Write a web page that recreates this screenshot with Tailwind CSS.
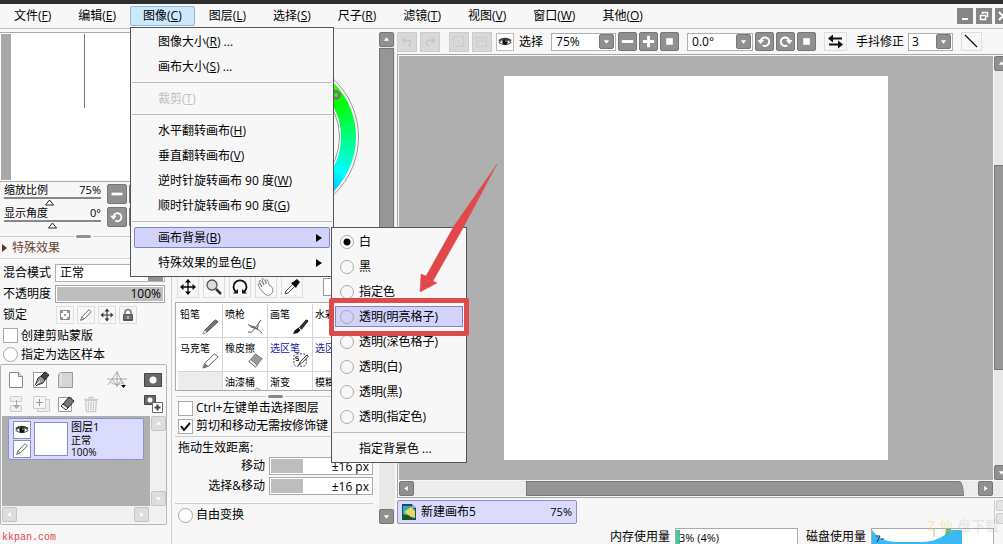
<!DOCTYPE html>
<html lang="zh-CN">
<head>
<meta charset="utf-8">
<title>新建画布5</title>
<script src="https://cdn.jsdelivr.net/npm/@tailwindcss/browser@4"></script>
</head>
<body class="relative flex h-screen flex-col overflow-hidden bg-[#f7f7f7] font-['Open_Sans','Noto_Sans_CJK_SC',sans-serif] text-[12px] leading-4 text-black">
<svg class="hidden">
  <symbol id="up" viewBox="0 0 15 15"><path d="M4.500 9h6l-3-4z" fill="#fff"/></symbol>
  <symbol id="down" viewBox="0 0 15 15"><path d="M4.500 6h6l-3 4z" fill="#fff"/></symbol>
  <symbol id="left" viewBox="0 0 15 15"><path d="M9 4.500v6l-4-3z" fill="#fff"/></symbol>
  <symbol id="right" viewBox="0 0 15 15"><path d="M6 4.500v6l4-3z" fill="#fff"/></symbol>
  <symbol id="stop" viewBox="0 0 20 20"><path d="M6.500 6.500h7v7h-7z" fill="#fff"/></symbol>
  <symbol id="minus" viewBox="0 0 20 20"><path d="M4 8.500h12v3H4z" fill="#fff"/></symbol>
  <symbol id="plus" viewBox="0 0 20 20"><path d="M4 8.500h12v3H4zM8.500 4h3v12h-3z" fill="#fff"/></symbol>
  <symbol id="ccw" viewBox="0 0 20 20"><path d="M6 9.500A4.500 4.500 0 1 1 8 14" fill="none" stroke="#fff" stroke-width="2"/><path d="M2.500 8.500h7L6 13z" fill="#fff"/></symbol>
  <symbol id="cw" viewBox="0 0 20 20"><path d="M14 9.500A4.500 4.500 0 1 0 12 14" fill="none" stroke="#fff" stroke-width="2"/><path d="M17.500 8.500h-7L14 13z" fill="#fff"/></symbol>
  <symbol id="eye" viewBox="0 0 18 18"><path d="M2 9.500q7-7 14 0q-7 5-14 0z" fill="#fff" stroke="#222"/><circle cx="9" cy="9" r="3" fill="#111"/><path d="M2 7.500q7-5 14 0" fill="none" stroke="#333" stroke-width="1.500"/><circle cx="10" cy="8" r=".8" fill="#fff"/></symbol>
  <symbol id="pencil" viewBox="0 0 18 18"><path d="M3 15l1.500-4L12.500 3l2.500 2.500-8 8zM4.500 11L7 13.500" fill="#fff" stroke="#555"/></symbol>
  <symbol id="move" viewBox="0 0 18 18"><path d="M9 3v12M3 9h12" stroke="currentColor" stroke-width="1.300"/><path d="M9 1l3 3.500H6zM9 17l3-3.500H6zM1 9l3.500-3v6zM17 9l-3.500-3v6z" fill="currentColor"/></symbol>
</svg>

<div class="h-1 shrink-0 bg-[#2e2e2e]"></div>
<header class="flex h-6 shrink-0 items-center overflow-hidden pl-px">
  <nav class="flex gap-px">
    <button class="h-5 border border-transparent px-3 leading-[18px]">文件(<u>F</u>)</button>
    <button class="h-5 border border-transparent px-3 leading-[18px]">编辑(<u>E</u>)</button>
    <button class="h-5 rounded-xs border border-[#90b8d8] bg-[#cce8fc] px-3 leading-[18px]">图像(<u>C</u>)</button>
    <button class="h-5 border border-transparent px-3 leading-[18px]">图层(<u>L</u>)</button>
    <button class="h-5 border border-transparent px-3 leading-[18px]">选择(<u>S</u>)</button>
    <button class="h-5 border border-transparent px-3 leading-[18px]">尺子(<u>R</u>)</button>
    <button class="h-5 border border-transparent px-3 leading-[18px]">滤镜(<u>T</u>)</button>
    <button class="h-5 border border-transparent px-3 leading-[18px]">视图(<u>V</u>)</button>
    <button class="h-5 border border-transparent px-3 leading-[18px]">窗口(<u>W</u>)</button>
    <button class="h-5 border border-transparent px-3 leading-[18px]">其他(<u>O</u>)</button>
  </nav>
  <div class="-mr-2 ml-auto flex shrink-0 gap-[3px]">
    <button aria-label="最小化" class="size-4 bg-[#858585]"><svg viewBox="0 0 16 16"><path d="M5 10h6v2H5z" fill="#fff"/></svg></button>
    <button aria-label="还原" class="size-4 bg-[#858585]"><svg viewBox="0 0 16 16"><path d="M6.500 6V4.500h5v4H10M4.500 7.500h5v4h-5z" fill="none" stroke="#fff" stroke-width="1.500"/></svg></button>
    <button aria-label="关闭" class="size-4 bg-[#858585]"><svg viewBox="0 0 16 16"><path d="M4 4l8 8M12 4l-8 8" stroke="#fff" stroke-width="2"/></svg></button>
  </div>
</header>

<main class="flex min-h-0 flex-1 overflow-hidden border-t border-[#c0c0c0]">
  <!-- Navigator and layers -->
  <section class="flex w-[172px] shrink-0 flex-col border-r border-[#ccc] pt-[3px]">
    <div class="flex h-[150px] shrink-0 border-y border-[#aaa] bg-white pl-px">
      <div class="my-px w-[10px] bg-[#a8a8a8]"></div>
      <div class="ml-[73px] mt-px h-[74px] w-px bg-[#777]"></div>
    </div>
    <div class="flex h-6 shrink-0 items-end gap-[6px] overflow-hidden pl-1">
      <div class="w-[97px] shrink-0">
        <div class="flex justify-between leading-[14px]"><span class="text-[11px]">缩放比例</span><span class="text-[11px]">75%</span></div>
        <div class="h-[2px] bg-[#888]"></div>
        <svg class="ml-10 h-[7px] w-[11px]" viewBox="0 0 11 7"><path d="M5.500 1L9.500 6h-8z" fill="#fff" stroke="#222"/></svg>
      </div>
      <button aria-label="缩小" class="mb-0.5 size-5 shrink-0 rounded-xs border border-[#777] bg-[#909090]"><svg class="size-full"><use href="#minus"/></svg></button>
      <button aria-label="放大" class="-ml-1 mb-0.5 size-5 shrink-0 rounded-xs border border-[#777] bg-[#909090]"><svg class="size-full"><use href="#plus"/></svg></button>
    </div>
    <div class="flex h-[23px] shrink-0 items-end gap-[6px] overflow-hidden pl-1">
      <div class="w-[97px] shrink-0">
        <div class="flex justify-between leading-[14px]"><span class="text-[11px]">显示角度</span><span class="text-[11px]">0°</span></div>
        <div class="h-[2px] bg-[#888]"></div>
        <svg class="ml-[43px] h-[7px] w-[11px]" viewBox="0 0 11 7"><path d="M5.500 1L9.500 6h-8z" fill="#fff" stroke="#222"/></svg>
      </div>
      <button aria-label="逆时针" class="mb-0.5 size-5 shrink-0 rounded-xs border border-[#777] bg-[#909090]"><svg class="size-full"><use href="#ccw"/></svg></button>
      <button aria-label="顺时针" class="-ml-1 mb-0.5 size-5 shrink-0 rounded-xs border border-[#777] bg-[#909090]"><svg class="size-full"><use href="#cw"/></svg></button>
    </div>
    <div class="mt-1.5 flex h-[3px] shrink-0 items-center gap-[2px]"><i class="h-px w-[74px] bg-[#ccc]"></i><i class="h-[3px] w-[15px] rounded-full bg-[#909090]"></i><i class="h-px flex-1 bg-[#ccc]"></i></div>
    <button class="flex h-[21px] shrink-0 items-center gap-[5px] border-b border-[#d5d5d5] pl-[2px] text-[#6c4334]"><svg class="h-2 w-[5px]" viewBox="0 0 5 8"><path d="M0 0l5 4-5 4z" fill="#5b3426"/></svg>特殊效果</button>
    <div class="flex flex-col gap-[3px] px-[3px] pt-[5px]">
      <div class="flex h-[18px] items-center gap-1"><label for="blend">混合模式</label>
        <div class="flex h-[18px] w-[110px] items-center border border-[#b0b0b0] bg-white pr-px"><select id="blend" class="min-w-0 flex-1 appearance-none bg-transparent pl-1 leading-4"><option>正常</option></select><svg class="size-[15px] bg-[#909090]"><use href="#down"/></svg></div></div>
      <div class="flex h-[18px] items-center gap-1"><label for="opac">不透明度</label>
        <div class="flex h-[18px] w-[110px] border border-[#a5a5a5] bg-white p-px"><input id="opac" value="100%" class="w-full min-w-0 bg-[#bdbdbd] pr-[2px] text-right"></div></div>
      <div class="flex h-[18px] items-center gap-[3px]"><span class="w-[50px]">锁定</span>
        <button aria-label="锁定透明" class="size-[18px] border border-[#ddd]"><svg viewBox="0 0 16 16"><path d="M3.500 3.500h9v9h-9z" fill="#fff" stroke="#888"/><path d="M4 4h2v2H4zM10 4h2v2h-2zM7 7h2v2H7zM4 10h2v2H4zM10 10h2v2h-2z" fill="#999"/></svg></button>
        <button aria-label="锁定画笔" class="size-[18px] border border-[#ddd]"><svg viewBox="0 0 18 18"><use href="#pencil"/></svg></button>
        <button aria-label="锁定移动" class="size-[18px] border border-[#ddd] text-[#333]"><svg viewBox="-1 -1 20 20"><use href="#move" width="18" height="18"/></svg></button>
        <button aria-label="全部锁定" class="size-[18px] border border-[#ddd]"><svg viewBox="0 0 16 16"><path d="M5 8V5.500a3 3 0 0 1 6 0V8" fill="none" stroke="#777" stroke-width="1.500"/><rect x="3" y="7" width="10" height="7" rx="1" fill="#555"/><path d="M4 9h8M4 11h8" stroke="#888"/><path d="M7.500 9h1v3h-1z" fill="#fff"/></svg></button>
      </div>
    </div>
    <label class="mt-[3px] flex h-[17px] items-center gap-[3px] pl-[3px]"><input type="checkbox" class="size-[15px] appearance-none border border-[#aaa] bg-white">创建剪贴蒙版</label>
    <label class="mt-0.5 flex h-[17px] items-center gap-[3px] pl-[3px]"><input type="radio" class="size-[15px] appearance-none rounded-full border border-[#aaa] bg-white">指定为选区样本</label>

    <div class="mr-1 mt-px flex h-[161px] shrink-0 flex-col rounded-xs border border-[#b5b5b5] p-px">
      <div class="grid h-[50px] shrink-0 grid-cols-[25px_25px_25px_25px_25px_1fr] grid-rows-2 items-center pl-[5px] pt-0.5">
        <button aria-label="新建图层"><svg class="size-[18px]" viewBox="0 0 18 18"><path d="M2.500 1.500h9l4 4v11h-13z" fill="#fff" stroke="#888"/><path d="M11.500 1.500v4h4" fill="#ddd" stroke="#888"/></svg></button>
        <button aria-label="新建钢笔图层"><svg class="size-[18px]" viewBox="0 0 18 18"><path d="M1.500 1.500h13v15h-13z" fill="#fff" stroke="#999"/><path d="M3 15l3-8 3-2 4 4-2 3z" fill="#999" stroke="#333"/><path d="M9 5l4-4 4 3-4 5z" fill="#444" stroke="#222"/><path d="M3 15l5-5" stroke="#fff"/></svg></button>
        <button aria-label="新建图层组"><svg class="size-[18px]" viewBox="0 0 18 18"><path d="M1.500 3.500l2-2h12v15h-14z" fill="#d5d5d5" stroke="#999"/><path d="M4 2v11l-2 3" stroke="#eee" fill="none"/></svg></button>
        <span></span>
        <button aria-label="透视尺"><svg class="size-[20px]" viewBox="0 0 20 20"><path d="M0 9h20M1 15L10 2l7 13M3 12q7 5 14 0M10 1v16M5 9l5 7 5-7" fill="none" stroke="#999" stroke-width=".8"/><path d="M14 15h5l-2.500 3z" fill="#000"/></svg></button>
        <button aria-label="蒙版" class="ml-3"><svg class="size-[18px]" viewBox="0 0 18 18"><path d="M.5 2.500h17v13H.5z" fill="#686868" stroke="#444"/><circle cx="9" cy="9" r="3.500" fill="#fff"/></svg></button>
        <button aria-label="向下合并"><svg class="size-[18px]" viewBox="0 0 18 18"><path d="M3.500 1.500h11v5h-11zM3.500 10.500h11v6h-11z" fill="#eee" stroke="#ccc"/><path d="M9 5v5H6l3.500 4L13 10h-3V5z" fill="#aaa"/></svg></button>
        <button aria-label="复制图层"><svg class="size-[18px]" viewBox="0 0 18 18"><path d="M5.500 4.500h12v12h-12z" fill="#eee" stroke="#ccc"/><path d="M1.500 1.500h12v12h-12z" fill="#f5f5f5" stroke="#ccc"/><path d="M7.500 4v7M4 7.500h7" stroke="#999"/></svg></button>
        <button aria-label="清除图层"><svg class="size-[18px]" viewBox="0 0 18 18"><path d="M1.500 2.500h13v14h-13z" fill="#fff" stroke="#999"/><path d="M6 9l6-7 5 4-6 7z" fill="#777" stroke="#222"/><path d="M6 9l5 4-2 2-5-4z" fill="#eee" stroke="#333"/></svg></button>
        <button aria-label="删除图层"><svg class="size-[18px]" viewBox="0 0 18 18"><path d="M3.500 5.500h11l-1 11h-9zM2 4.500h14M7 4V2.500h4V4M6.500 7v8M9 7v8M11.500 7v8" fill="none" stroke="#ccc" stroke-width="1.300"/></svg></button>
        <span></span>
        <button aria-label="添加蒙版" class="ml-3"><svg class="size-[20px]" viewBox="0 0 20 20"><path d="M.5 1.500h11v9H.5z" fill="#686868" stroke="#444"/><circle cx="6" cy="6" r="2.500" fill="#fff"/><path d="M8.500 8.500h10v10h-10z" fill="#fff" stroke="#666"/><path d="M13.500 10.500v6M10.500 13.500h6" stroke="#444" stroke-width="2"/></svg></button>
      </div>
      <div class="flex min-h-0 flex-1">
        <div class="flex-1 bg-[#afafaf] px-1.5 pt-0.5">
          <div class="flex h-[42px] w-[136px] items-center gap-[3px] rounded-xs border border-[#9090cc] bg-[#dadafc] pl-1">
            <div class="flex flex-col gap-px">
              <button aria-label="显示" class="size-[18px] border border-[#8a8ac8] bg-white"><svg viewBox="0 0 18 18"><use href="#eye"/></svg></button>
              <button aria-label="编辑" class="size-[18px] border border-[#8a8ac8] bg-white"><svg viewBox="0 0 18 18"><use href="#pencil"/></svg></button>
            </div>
            <div class="size-[34px] border border-[#8a8ac8] bg-white"></div>
            <div class="text-[10px] leading-3"><div class="text-[11px] leading-[14px]">图层1</div><div>正常</div><div>100%</div></div>
          </div>
        </div>
        <div class="flex w-4 shrink-0 flex-col justify-between bg-[#f0f0f0] pl-px"><button aria-label="上" class="size-[15px] rounded-xs border border-[#c5c5c5] bg-[#ddd]"><svg class="size-full"><use href="#up"/></svg></button><button aria-label="下" class="size-[15px] rounded-xs border border-[#c5c5c5] bg-[#ddd]"><svg class="size-full"><use href="#down"/></svg></button></div>
      </div>
      <div class="flex h-[17px] shrink-0 items-center justify-between bg-[#f0f0f0] pr-4"><button aria-label="左" class="size-[15px] rounded-xs border border-[#c5c5c5] bg-[#ddd]"><svg class="size-full"><use href="#left"/></svg></button><button aria-label="右" class="size-[15px] rounded-xs border border-[#c5c5c5] bg-[#ddd]"><svg class="size-full"><use href="#right"/></svg></button></div>
    </div>
    <a href="#" class="mt-[7px] pl-[2px] font-['Liberation_Mono',monospace] text-[10px] leading-3 text-[#e04848]">kkpan.com</a>
  </section>

  <!-- Colour wheel and tools -->
  <section class="flex w-[207px] shrink-0 flex-col pb-5">
    <div class="flex h-[247px] shrink-0 justify-center pl-1.5 pt-7">
      <div class="relative size-40 rounded-full border border-[#999] p-[2px]">
        <div class="size-full rounded-full bg-[conic-gradient(#ff0,#0f0_60deg,#0ff_120deg,#00f_180deg,#f0f_240deg,#f00_300deg,#ff0)] p-[15px]"><div class="size-full rounded-full border-2 border-white bg-[#f7f7f7] outline -outline-offset-2 outline-[#999]"></div></div>
        <i class="absolute right-[17px] top-[32px] size-[10px] rounded-full border-[3px] border-[#777]"></i>
      </div>
    </div>
    <div class="flex shrink-0 gap-1 pl-[5px]">
      <button aria-label="移动" class="size-[22px] border border-[#ddd]"><svg viewBox="0 0 20 20"><use href="#move" x="1" y="1" width="18" height="18"/></svg></button>
      <button aria-label="缩放" class="size-[22px] border border-[#ddd]"><svg viewBox="0 0 20 20"><circle cx="8" cy="8" r="5" fill="#ddd" stroke="#555" stroke-width="1.300"/><path d="M12 12l5 5" stroke="#333" stroke-width="2.500"/></svg></button>
      <button aria-label="旋转" class="size-[22px] border border-[#ddd]"><svg viewBox="0 0 20 20"><path d="M6 15A6.500 6.500 0 1 1 14 15" fill="none" stroke="#111" stroke-width="1.800"/><path d="M3 16.500h5v-4.500zM17 16.500h-5v-4.500z" fill="#111"/></svg></button>
      <button aria-label="抓手" class="size-[22px] border border-[#ddd]"><svg viewBox="0 0 20 20"><path d="M9 17C5 14 3 10 2 7c1-1 2 0 4 3L3 4c1-1 2-1 5 4L6 2c1-1 2-1 4 5l0-4c1-1 2 0 3 5 3 1 5 5 3 8-2 3-5 3-7 1z" fill="#fff" stroke="#777" stroke-width=".9"/></svg></button>
      <button aria-label="吸管" class="size-[22px] border border-[#ddd]"><svg viewBox="0 0 20 20"><path d="M3 17l1-3 7-7 2 2-7 7z" fill="#fff" stroke="#555"/><path d="M9 6l2-1 4-3 3 3-3 4-1 2z" fill="#111"/></svg></button>
      <span class="ml-4 mt-0.5 size-[18px] border border-[#999] bg-white"></span>
    </div>
    <div class="ml-[3px] mt-1 h-[89px] shrink-0 overflow-hidden border border-[#aaa] bg-white p-px pl-0.5 text-[10px] leading-3">
      <div class="grid auto-rows-[34px] grid-cols-[repeat(4,45px)] *:border-b *:border-r *:border-[#d5d5d5]">
        <button class="flex flex-col pl-0.5 pt-1 text-left">铅笔<svg class="-mt-0.5 ml-auto mr-[3px] size-[17px]" viewBox="0 0 18 18"><path d="M1 17l2-4L14 2l3 2L5 15z" fill="#777" stroke="#444"/><path d="M1 17l2-4 2 2z" fill="#eee"/></svg></button>
        <button class="flex flex-col pl-0.5 pt-1 text-left">喷枪<svg class="-mt-0.5 ml-auto mr-[3px] size-[17px]" viewBox="0 0 18 18"><path d="M1 7l8 3 6-8M9 10l7 6M9 10l-4 5H1M3 9l8 3 1-6" fill="none" stroke="#555"/><path d="M7 8l4 3-2 1-3-2z" fill="#777"/></svg></button>
        <button class="flex flex-col pl-0.5 pt-1 text-left">画笔<svg class="-mt-0.5 ml-auto mr-[3px] size-[17px]" viewBox="0 0 18 18"><path d="M8 10l7-8 2 1-7 9z" fill="#333" stroke="#111"/><path d="M1 17l2-4 4-3 2 3-3 3z" fill="#111"/><path d="M7 10l3 3" stroke="#fff"/></svg></button>
        <button class="flex flex-col pl-0.5 pt-1 text-left">水彩笔</button>
        <button class="flex flex-col pl-0.5 pt-1 text-left">马克笔<svg class="-mt-0.5 ml-auto mr-[3px] size-[17px]" viewBox="0 0 18 18"><path d="M1 17l2-5L13 2l4 3L7 15z" fill="#fff" stroke="#555"/><path d="M3 12l4 3-6 2z" fill="#777"/></svg></button>
        <button class="flex flex-col pl-0.5 pt-1 text-left">橡皮擦<svg class="-mt-0.5 ml-auto mr-[3px] size-[17px]" viewBox="0 0 18 18"><path d="M2 10L9 2l7 5-7 9z" fill="#999" stroke="#777"/><path d="M2 10l7 6 2-2-7-6z" fill="#eee" stroke="#777"/></svg></button>
        <button class="flex flex-col pl-0.5 pt-1 text-left text-[#2020a0]">选区笔<svg class="-mt-0.5 ml-auto mr-[3px] size-[17px]" viewBox="0 0 18 18"><rect x="2" y="2" width="13" height="13" rx="3" fill="none" stroke="#222" stroke-dasharray="2 1.500"/><path d="M7 14l2-4 7-7 1 2-7 7z" fill="#fff" stroke="#222"/><path d="M7 5H4v2h3v2H4" fill="none" stroke="#222"/></svg></button>
        <button class="flex flex-col pl-0.5 pt-1 text-left text-[#2020a0]">选区擦</button>
        <div class="bg-[#ececec]"></div>
        <button class="flex flex-col pl-0.5 pt-1 text-left">油漆桶<svg class="-mt-0.5 ml-auto mr-[3px] size-[17px]" viewBox="0 0 18 18"><path d="M8 4l3-2 4 3-7 8-5-4z" fill="#eee" stroke="#888"/></svg></button>
        <button class="flex flex-col pl-0.5 pt-1 text-left">渐变</button>
        <button class="flex flex-col pl-0.5 pt-1 text-left">模糊</button>
      </div>
    </div>
    <div class="ml-1 mt-1 flex h-[3px] shrink-0 items-center gap-[2px]"><i class="h-px w-[90px] bg-[#ccc]"></i><i class="h-[3px] w-[15px] rounded-full bg-[#888]"></i><i class="h-px flex-1 bg-[#ccc]"></i></div>
    <div class="ml-[3px] mr-1 flex flex-col gap-0.5 border-b border-[#ccc] pb-[2px] pl-[3px] pt-0.5">
      <label class="flex h-4 items-center gap-[3px]"><input type="checkbox" class="size-[15px] appearance-none border border-[#aaa] bg-white">Ctrl+左键单击选择图层</label>
      <label class="flex h-4 items-center gap-[3px]"><span class="grid"><input type="checkbox" checked class="col-start-1 row-start-1 size-[15px] appearance-none border border-[#aaa] bg-white"><svg class="pointer-events-none col-start-1 row-start-1 size-[15px]" viewBox="0 0 15 15"><path d="M3 7l3 4 6-7" fill="none" stroke="#111" stroke-width="2"/></svg></span>剪切和移动无需按修饰键</label>
    </div>
    <div class="ml-[3px] mr-1.5 flex flex-col gap-0.5 border-b border-[#ccc] pb-2 pl-[3px] pt-[4px]">
      <span class="leading-[14px]">拖动生效距离:</span>
      <div class="flex h-[18px] items-center justify-end gap-1"><label for="d1">移动</label><input id="d1" value="±16 px" class="h-[18px] w-[104px] border border-[#aaa] bg-white bg-[linear-gradient(#bdbdbd,#bdbdbd)] bg-[length:32px_14px] bg-[position:1px_1px] bg-no-repeat pr-[3px] text-right"></div>
      <div class="flex h-[18px] items-center justify-end gap-1"><label for="d2">选择&amp;移动</label><input id="d2" value="±16 px" class="h-[18px] w-[104px] border border-[#aaa] bg-white bg-[linear-gradient(#bdbdbd,#bdbdbd)] bg-[length:32px_14px] bg-[position:1px_1px] bg-no-repeat pr-[3px] text-right"></div>
    </div>
    <label class="ml-1.5 mt-[3px] flex h-4 items-center gap-[3px]"><input type="radio" class="size-[15px] appearance-none rounded-full border border-[#aaa] bg-white">自由变换</label>
  </section>
  <div class="mb-5 mt-[3px] flex w-4 shrink-0 flex-col bg-[#e8e8e8]">
    <button aria-label="上" class="mb-px size-[15px] rounded-xs border border-[#777] bg-[#909090]"><svg class="size-full"><use href="#up"/></svg></button>
    <div class="h-[340px] w-[15px] border border-[#777] bg-[#969696]"></div>
    <button aria-label="下" class="mt-auto size-[15px] rounded-xs border border-[#777] bg-[#909090]"><svg class="size-full"><use href="#down"/></svg></button>
  </div>

  <!-- Canvas -->
  <section class="ml-[2px] flex min-w-0 flex-1 flex-col">
    <div class="flex h-[25px] shrink-0 items-center gap-[2px]">
      <button aria-label="撤销" class="size-5 border border-[#ccc] bg-[#d8d8d8]"><svg viewBox="0 0 20 20"><path d="M6 8h5a3 3 0 1 1 0 6M8 5L5 8l3 3" fill="none" stroke="#c5c5c5" stroke-width="1.500"/></svg></button>
      <button aria-label="重做" class="ml-px size-5 border border-[#ccc] bg-[#d8d8d8]"><svg viewBox="0 0 20 20"><path d="M14 8H9a3 3 0 1 0 0 6M12 5l3 3-3 3" fill="none" stroke="#c5c5c5" stroke-width="1.500"/></svg></button>
      <button aria-label="取消选择" class="ml-[7px] size-5 border border-[#ccc] bg-[#d8d8d8]"><svg viewBox="0 0 20 20"><path d="M4 4h11v11H4zM8 8l7 7" fill="none" stroke="#c8c8c8"/></svg></button>
      <button aria-label="反选" class="ml-px size-5 border border-[#ccc] bg-[#d8d8d8]"><svg viewBox="0 0 20 20"><path d="M4 5h11v10H4zM4 9h11" fill="none" stroke="#c8c8c8"/></svg></button>
      <button aria-label="显示选区" class="ml-[2px] size-[18px] border border-[#bbb] bg-white"><svg viewBox="0 0 18 18"><use href="#eye"/></svg></button>
      <span class="ml-[3px] shrink-0">选择</span>
      <div class="ml-1.5 flex h-[18px] w-[65px] shrink-0 items-center border border-[#b0b0b0] bg-white pr-px"><select aria-label="缩放" class="min-w-0 flex-1 appearance-none pl-1"><option>75%</option></select><svg class="size-[15px] rounded-xs border border-[#777] bg-[#909090]"><use href="#down"/></svg></div>
      <button aria-label="缩小" class="size-[19px] shrink-0 rounded-xs border border-[#777] bg-[#909090]"><svg viewBox="1 1 18 18"><use href="#minus" width="20" height="20"/></svg></button>
      <button aria-label="放大" class="size-[19px] shrink-0 rounded-xs border border-[#777] bg-[#909090]"><svg viewBox="1 1 18 18"><use href="#plus" width="20" height="20"/></svg></button>
      <button aria-label="重置缩放" class="size-[19px] shrink-0 rounded-xs border border-[#777] bg-[#909090]"><svg viewBox="1 1 18 18"><use href="#stop" width="20" height="20"/></svg></button>
      <div class="ml-1.5 flex h-[18px] w-[66px] shrink-0 items-center border border-[#b0b0b0] bg-white pr-px"><select aria-label="角度" class="min-w-0 flex-1 appearance-none pl-1"><option>0.0°</option></select><svg class="size-[15px] rounded-xs border border-[#777] bg-[#909090]"><use href="#down"/></svg></div>
      <button aria-label="逆时针" class="size-[19px] shrink-0 rounded-xs border border-[#777] bg-[#909090]"><svg viewBox="1 1 18 18"><use href="#ccw" width="20" height="20"/></svg></button>
      <button aria-label="顺时针" class="size-[19px] shrink-0 rounded-xs border border-[#777] bg-[#909090]"><svg viewBox="1 1 18 18"><use href="#cw" width="20" height="20"/></svg></button>
      <button aria-label="重置角度" class="size-[19px] shrink-0 rounded-xs border border-[#777] bg-[#909090]"><svg viewBox="1 1 18 18"><use href="#stop" width="20" height="20"/></svg></button>
      <button aria-label="水平翻转" class="ml-1.5 h-[19px] w-[23px] shrink-0 border border-[#ddd]"><svg viewBox="0 0 21 17"><path d="M7 5.500h10M4 11.500h10" stroke="#111" stroke-width="2"/><path d="M3 5.500l5-4v8zM18 11.500l-5-4v8z" fill="#111"/></svg></button>
      <label for="stab" class="ml-[7px] shrink-0">手抖修正</label>
      <div class="ml-[2px] flex h-[18px] w-[45px] shrink-0 items-center border border-[#b0b0b0] bg-white pr-px"><select id="stab" class="min-w-0 flex-1 appearance-none pl-[3px]"><option>3</option></select><svg class="size-[15px] rounded-xs border border-[#777] bg-[#909090]"><use href="#down"/></svg></div>
      <button aria-label="直线" class="ml-1.5 h-[19px] w-[21px] shrink-0 border border-[#ddd]"><svg viewBox="0 0 19 17"><path d="M3 2l12 12" stroke="#111" stroke-width="1.300"/></svg></button>
    </div>
    <div class="flex h-[444px] shrink-0 flex-col border-y border-l border-[#a5a5a5] pl-px pt-px">
      <div class="flex min-h-0 flex-1">
        <div class="min-w-0 flex-1 bg-[#afafaf] pl-[105px] pt-5"><div class="size-96 bg-white"></div></div>
        <div class="ml-px flex w-[9px] shrink-0 flex-col overflow-hidden bg-[#e8e8e8]">
          <button aria-label="上" class="size-[15px] rounded-xs border border-[#777] bg-[#909090]"><svg class="size-full"><use href="#up"/></svg></button>
          <div class="mt-[94px] h-[205px] w-[15px] border border-[#777] bg-[#969696]"></div>
          <button aria-label="下" class="mt-auto size-[15px] rounded-xs border border-[#777] bg-[#909090]"><svg class="size-full"><use href="#down"/></svg></button>
        </div>
      </div>
      <div class="my-px flex h-[15px] shrink-0 bg-[#ececec]">
        <button aria-label="左" class="size-[15px] shrink-0 rounded-xs border border-[#777] bg-[#909090]"><svg class="size-full"><use href="#left"/></svg></button>
        <div class="ml-28 mr-3.5 flex-1 rounded-tr-[5px_15px] border border-[#777] bg-[#969696]"></div>
        <button aria-label="右" class="mr-2.5 size-[15px] shrink-0 rounded-xs border border-[#777] bg-[#909090]"><svg class="size-full"><use href="#right"/></svg></button>
      </div>
    </div>
    <div class="flex h-[26px] shrink-0 pt-[2px]">
      <button class="flex h-6 w-[180px] items-center gap-[5px] rounded-xs border border-[#8e8ec4] bg-[#dadafc] px-1">
        <svg class="h-4 w-[14px]" viewBox="0 0 14 16"><path d="M0 0h10l4 4v12H0z" fill="#174b68"/><path d="M1 2h8l4 4v3L1 12z" fill="#3caab0"/><path d="M2 8l7-5 4 4v7l-4-1z" fill="#e4d95e"/><path d="M0 10l7 2 5 4H0z" fill="#16582c"/><path d="M10 0v4h4z" fill="#9ac"/></svg>
        <span>新建画布5</span><span class="ml-auto text-[11px]">75%</span></button>
      <div class="ml-auto flex w-[9px] flex-col gap-[2px] overflow-hidden border-l border-[#ccc] pl-px"><button aria-label="上一个" class="size-[11px] rounded-xs border border-[#ccc] bg-[#e4e4e4]"></button><button aria-label="下一个" class="size-[11px] rounded-xs border border-[#ccc] bg-[#e4e4e4]"></button></div>
    </div>
    <footer class="flex min-h-0 flex-1 items-stretch justify-end overflow-hidden pr-[9px] pt-1">
      <span class="shrink-0 leading-[17px]">内存使用量</span>
      <div class="ml-[5px] flex w-[123px] shrink-0 border border-b-0 border-[#aaa] bg-white pt-px"><i class="-mr-[3px] w-1 bg-[#42c89a]"></i><span class="pl-0.5 text-[11px] leading-[15px]">3% (4%)</span></div>
      <svg class="ml-2 h-4 w-0 overflow-visible" viewBox="0 0 1 16"><path d="M3 2h2" stroke="#345"/><path d="M6 0h4v3l-4 2z" fill="#52b788"/></svg>
      <span class="shrink-0 leading-[17px]">磁盘使用量</span>
      <div class="ml-[5px] w-[123px] shrink-0 overflow-hidden border border-b-0 border-[#aaa] bg-white"><svg class="h-[20px] w-[90px]" viewBox="0 0 90 20"><path d="M0 1q8 12 25 12h25q16-1 24-8l4-4h12v19H0z" fill="#3cb8f5"/><path d="M74 0h5v3q-3 3-6 4z" fill="#52b788"/><path d="M4 7h4l-3 6M9 10h3" stroke="#234" fill="none"/><path d="M62 0v8" stroke="#bbb"/></svg></div>
    </footer>
  </section>
</main>

<!-- Watermark over the corner -->
<div class="pointer-events-none absolute bottom-[10px] right-1 flex items-center text-[14px] font-bold text-[#a0a0a0]/20"><span class="text-[#e8c840]/25">Z 仙</span>&nbsp;盘下载</div>

<!-- Image menu -->
<div role="menu" class="absolute left-[130px] top-[27px] flex w-[204px] flex-col border border-[#555] bg-[#f7f7f7] pt-px">
  <button role="menuitem" class="h-[25px] pl-[27px] text-left">图像大小(<u>R</u>) ...</button>
  <button role="menuitem" class="h-[25px] pl-[27px] text-left">画布大小(<u>S</u>) ...</button>
  <hr class="mx-px my-[3px] border-[#bbb]">
  <button role="menuitem" disabled class="h-[25px] pl-[27px] text-left text-[#c0c0c0]">裁剪(<u>T</u>)</button>
  <hr class="mx-px my-[3px] border-[#bbb]">
  <button role="menuitem" class="h-[25px] pl-[27px] text-left">水平翻转画布(<u>H</u>)</button>
  <button role="menuitem" class="h-[25px] pl-[27px] text-left">垂直翻转画布(<u>V</u>)</button>
  <button role="menuitem" class="h-[25px] pl-[27px] text-left">逆时针旋转画布 90 度(<u>W</u>)</button>
  <button role="menuitem" class="h-[25px] pl-[27px] text-left">顺时针旋转画布 90 度(<u>G</u>)</button>
  <hr class="mx-px my-[3px] border-[#bbb]">
  <button role="menuitem" class="mx-[3px] my-[2px] flex h-[21px] items-center justify-between rounded-xs border border-[#8484bc] bg-[#d2d2fa] pl-[23px] pr-[7px]"><span>画布背景(<u>B</u>)</span><svg class="h-2 w-[6px]" viewBox="0 0 6 8"><path d="M0 0l6 4-6 4z"/></svg></button>
  <button role="menuitem" class="mb-px flex h-[25px] items-center justify-between pl-[27px] pr-[11px]"><span>特殊效果的显色(<u>E</u>)</span><svg class="h-2 w-[6px]" viewBox="0 0 6 8"><path d="M0 0l6 4-6 4z"/></svg></button>
</div>

<!-- Canvas background submenu -->
<div role="menu" class="absolute left-[331px] top-[227px] flex w-[136px] flex-col border border-[#555] bg-[#f7f7f7] pb-px pt-px">
  <label class="flex h-[25px] items-center gap-[5px] pl-2"><input type="radio" name="bg" checked class="size-[14px] appearance-none rounded-full border border-[#aaa] bg-white checked:bg-[radial-gradient(circle,#000_3px,#fff_4px)]">白</label>
  <label class="flex h-[25px] items-center gap-[5px] pl-2"><input type="radio" name="bg" class="size-[14px] appearance-none rounded-full border border-[#aaa]">黑</label>
  <label class="flex h-[25px] items-center gap-[5px] pl-2"><input type="radio" name="bg" class="size-[14px] appearance-none rounded-full border border-[#aaa]">指定色</label>
  <label class="mx-[3px] my-[2px] flex h-[21px] items-center gap-[5px] border border-[#8484bc] bg-[#d2d2fa] pl-1"><input type="radio" name="bg" class="size-[14px] appearance-none rounded-full border border-[#aaa]">透明(明亮格子)</label>
  <label class="flex h-[25px] items-center gap-[5px] pl-2"><input type="radio" name="bg" class="size-[14px] appearance-none rounded-full border border-[#aaa]">透明(深色格子)</label>
  <label class="flex h-[25px] items-center gap-[5px] pl-2"><input type="radio" name="bg" class="size-[14px] appearance-none rounded-full border border-[#aaa]">透明(白)</label>
  <label class="flex h-[25px] items-center gap-[5px] pl-2"><input type="radio" name="bg" class="size-[14px] appearance-none rounded-full border border-[#aaa]">透明(黑)</label>
  <label class="flex h-[25px] items-center gap-[5px] pl-2"><input type="radio" name="bg" class="size-[14px] appearance-none rounded-full border border-[#aaa]">透明(指定色)</label>
  <hr class="mx-px my-[3px] border-[#bbb]">
  <button role="menuitem" class="h-[25px] pl-[27px] text-left">指定背景色 ...</button>
</div>

<!-- Callout frame and arrow -->
<div class="pointer-events-none absolute left-[329px] top-[298px] h-[38px] w-[140px] rounded-xs border-[5px] border-[#dc4a4c]"></div>
<svg class="pointer-events-none absolute left-[410px] top-[160px] h-[140px] w-[90px]" viewBox="410 160 90 140"><path d="M497 164L463 228 433 281l4 2-17 9 1-18 5 2 28-50z" fill="#e2484a" stroke="#cf5a5a" stroke-width=".5"/></svg>
</body>
</html>
